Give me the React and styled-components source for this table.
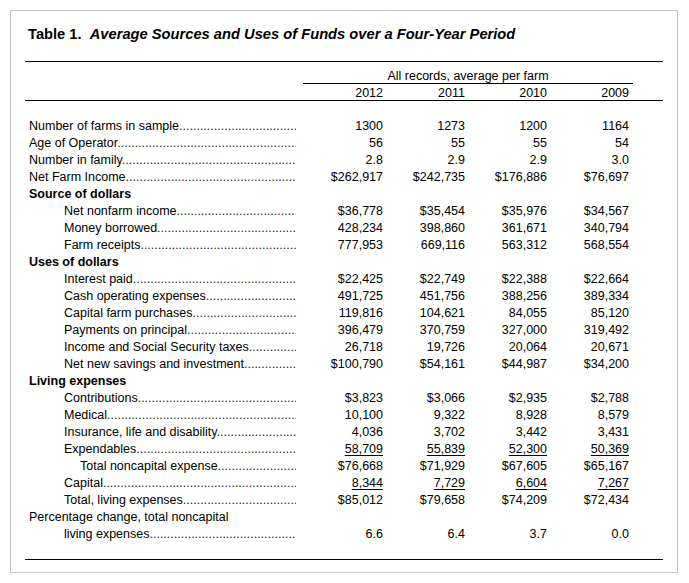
import styled, { createGlobalStyle } from "styled-components";

const GlobalStyle = createGlobalStyle`
  html, body {
    margin: 0;
    padding: 0;
    background: #fff;
  }
  body {
    font-family: "Liberation Sans", Arial, sans-serif;
    color: #000;
  }
`;

const Page = styled.div`
  padding: 10px;
  width: 688px;
  box-sizing: border-box;
`;

const Frame = styled.div`
  border: 1px solid #c4c4c4;
  padding: 14px 14px 13px 14px;
  height: 563px;
  box-sizing: border-box;
`;

const Title = styled.h1`
  margin: 0 0 18px 3px;
  font-size: 14.7px;
  line-height: 18px;
  font-weight: bold;
  white-space: pre;
`;

const Italic = styled.em`
  font-style: italic;
`;

const Table = styled.div`
  border-top: 1px solid #000;
  border-bottom: 1px solid #000;
  padding-bottom: 16px;
`;

const Grid = styled.div`
  display: grid;
  grid-template-columns: 273px 85px 82px 82px 82px 34px;
`;

const HeadGrid = styled(Grid)`
  border-bottom: 1px solid #000;
  margin-bottom: 17px;
`;

const Spanner = styled.div`
  grid-column: 2 / 7;
  margin: 9px 30px 0 5px;
  border-bottom: 1px solid #000;
  text-align: center;
  font-size: 12.5px;
  line-height: 11px;
  padding-bottom: 1px;
`;

const Year = styled.div`
  grid-column: ${(p) => p.col};
  padding-top: 2px;
  text-align: right;
  font-size: 12.5px;
  line-height: 14px;
`;

const Row = styled(Grid)`
  height: 17px;
  align-items: center;
  font-size: 12.5px;
  line-height: 17px;
`;

const Label = styled.div`
  grid-column: 1;
  padding-left: ${(p) => 4 + p.indent}px;
  font-weight: ${(p) => (p.bold ? "bold" : "normal")};
  white-space: nowrap;
  overflow: ${(p) => (p.leader ? "hidden" : "visible")};
  width: ${(p) => (p.leader ? 273 - 4 - p.indent - 2 : "auto")}px;

  ${(p) =>
    p.leader &&
    `&::after {
      content: "....................................................................................................";
      color: #222;
    }`}
`;

const Value = styled.div`
  grid-column: ${(p) => p.col};
  text-align: right;
  white-space: nowrap;
`;

const Under = styled.span`
  text-decoration: underline;
  text-underline-offset: 2px;
`;

const rows = [
  { label: "Number of farms in sample", v: ["1300", "1273", "1200", "1164"] },
  { label: "Age of Operator", v: ["56", "55", "55", "54"] },
  { label: "Number in family", v: ["2.8", "2.9", "2.9", "3.0"] },
  { label: "Net Farm Income", v: ["$262,917", "$242,735", "$176,886", "$76,697"] },
  { label: "Source of dollars", section: true },
  { label: "Net nonfarm income", indent: 35, v: ["$36,778", "$35,454", "$35,976", "$34,567"] },
  { label: "Money borrowed", indent: 35, v: ["428,234", "398,860", "361,671", "340,794"] },
  { label: "Farm receipts", indent: 35, v: ["777,953", "669,116", "563,312", "568,554"] },
  { label: "Uses of dollars", section: true },
  { label: "Interest paid", indent: 35, v: ["$22,425", "$22,749", "$22,388", "$22,664"] },
  { label: "Cash operating expenses", indent: 35, v: ["491,725", "451,756", "388,256", "389,334"] },
  { label: "Capital farm purchases", indent: 35, v: ["119,816", "104,621", "84,055", "85,120"] },
  { label: "Payments on principal", indent: 35, v: ["396,479", "370,759", "327,000", "319,492"] },
  { label: "Income and Social Security taxes", indent: 35, v: ["26,718", "19,726", "20,064", "20,671"] },
  { label: "Net new savings and investment", indent: 35, v: ["$100,790", "$54,161", "$44,987", "$34,200"] },
  { label: "Living expenses", section: true },
  { label: "Contributions", indent: 35, v: ["$3,823", "$3,066", "$2,935", "$2,788"] },
  { label: "Medical", indent: 35, v: ["10,100", "9,322", "8,928", "8,579"] },
  { label: "Insurance, life and disability", indent: 35, v: ["4,036", "3,702", "3,442", "3,431"] },
  { label: "Expendables", indent: 35, under: true, v: ["58,709", "55,839", "52,300", "50,369"] },
  { label: "Total noncapital expense", indent: 51, v: ["$76,668", "$71,929", "$67,605", "$65,167"] },
  { label: "Capital", indent: 35, under: true, v: ["8,344", "7,729", "6,604", "7,267"] },
  { label: "Total, living expenses", indent: 35, v: ["$85,012", "$79,658", "$74,209", "$72,434"] },
  { label: "Percentage change, total noncapital", plain: true },
  { label: "living expenses", indent: 35, v: ["6.6", "6.4", "3.7", "0.0"] },
];

const years = ["2012", "2011", "2010", "2009"];

export default function App() {
  return (
    <Page>
      <GlobalStyle />
      <Frame>
        <Title>
          Table 1.  <Italic>Average Sources and Uses of Funds over a Four-Year Period</Italic>
        </Title>
        <Table>
          <HeadGrid>
            <Spanner>All records, average per farm</Spanner>
            {years.map((y, i) => (
              <Year key={y} col={i + 2}>
                {y}
              </Year>
            ))}
          </HeadGrid>
          {rows.map((r) => (
            <Row key={r.label}>
              <Label
                indent={r.indent || 0}
                bold={r.section}
                leader={!r.section && !r.plain}
              >
                {r.label}
              </Label>
              {r.v &&
                r.v.map((v, i) => (
                  <Value key={i} col={i + 2}>
                    {r.under ? <Under>{v}</Under> : v}
                  </Value>
                ))}
            </Row>
          ))}
        </Table>
      </Frame>
    </Page>
  );
}
